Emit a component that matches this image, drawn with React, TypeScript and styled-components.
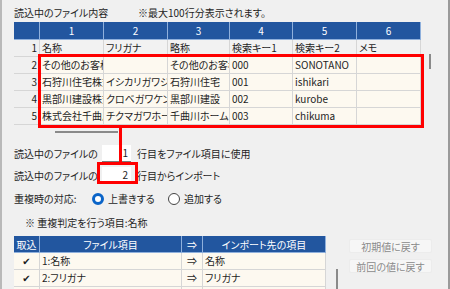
import styled, { createGlobalStyle } from 'styled-components';

const GlobalStyle = createGlobalStyle`
  html, body {
    margin: 0;
    padding: 0;
    background: #f0f0f0;
    overflow: hidden;
  }
  * {
    box-sizing: border-box;
  }
`;

const FONT = `"Noto Sans CJK JP", "Noto Sans", sans-serif`;

const Frame = styled.div`
  position: relative;
  width: 450px;
  height: 289px;
  overflow: hidden;
  border-left: 2px solid #b9b9b9;
  border-right: 2px solid #9a9a9a;
  padding-left: 12px;
  background: #f0f0f0;
  font-family: ${FONT};
  font-size: 10px;
  font-feature-settings: 'palt';
  color: #1e1e1e;
`;

const Caption = styled.div`
  display: flex;
  height: 22px;
  padding-top: 5px;
  line-height: 16px;
`;

const CaptionTitle = styled.span`
  width: 124px;
`;

const GridArea = styled.div`
  display: flex;
`;

const Grid = styled.div<{ cols: string }>`
  display: grid;
  grid-template-columns: ${({ cols }) => cols};
`;

const HeadCell = styled.div`
  height: 18px;
  line-height: 18px;
  background: #22569f;
  color: #ffffff;
  text-align: center;
  border-right: 1px solid #8fb0dc;
  border-bottom: 1px solid #8fb0dc;
  white-space: nowrap;
  overflow: hidden;
`;

const SmallHead = styled(HeadCell)`
  height: 17px;
  line-height: 17px;
`;

const NumCell = styled.div`
  height: 17px;
  line-height: 16px;
  background: #f0f0f0;
  text-align: right;
  padding-right: 2px;
  border-right: 1px solid #d6d6d6;
  border-bottom: 1px solid #d6d6d6;
`;

const Cell = styled.div<{ muted?: boolean; align?: string }>`
  height: 17px;
  line-height: 16px;
  padding: 0 2px;
  background: ${({ muted }) => (muted ? '#f2f2f2' : '#fdf9f0')};
  text-align: ${({ align }) => align || 'left'};
  border-right: 1px solid #d6d6d6;
  border-bottom: 1px solid #d6d6d6;
  white-space: nowrap;
  overflow: hidden;
  text-overflow: clip;
`;

const VTrack = styled.div<{ w: number; top: number; len: number }>`
  width: ${({ w }) => w}px;
  flex-shrink: 0;
  display: flex;
  justify-content: center;

  &::before {
    content: '';
    display: block;
    margin-top: ${({ top }) => top}px;
    width: 2px;
    height: ${({ len }) => len}px;
    background: #8a8a8a;
  }
`;

const HTrack = styled.div`
  height: 10px;
  padding-top: 6px;
  padding-left: 41px;

  &::before {
    content: '';
    display: block;
    width: 63px;
    height: 2px;
    background: #8a8a8a;
  }
`;

const FormRow = styled.div<{ mt: number }>`
  display: flex;
  align-items: center;
  height: 17px;
  margin-top: ${({ mt }) => mt}px;
  white-space: nowrap;
`;

const Label = styled.span<{ w: number }>`
  width: ${({ w }) => w}px;
  flex-shrink: 0;
`;

const NumBox = styled.div`
  width: 29px;
  height: 17px;
  line-height: 16px;
  background: #ffffff;
  border-bottom: 1px solid #7a7a7a;
  text-align: right;
  padding-right: 3px;
  margin-right: 6px;
`;

const Radio = styled.span<{ checked?: boolean }>`
  display: inline-block;
  width: 12px;
  height: 12px;
  border-radius: 50%;
  border: ${({ checked }) => (checked ? '3px solid #0a64c8' : '1px solid #444')};
  background: #ffffff;
  margin-right: 4px;
`;

const RadioOption = styled.span<{ w: number }>`
  display: inline-flex;
  align-items: center;
  width: ${({ w }) => w}px;
`;

const Note = styled.div`
  height: 17px;
  line-height: 17px;
  margin-top: 7px;
  padding-left: 11px;
`;

const BottomArea = styled.div`
  display: flex;
  margin-top: 5px;
`;

const ButtonCol = styled.div`
  display: flex;
  flex-direction: column;
  gap: 6px;
  padding-top: 3px;
  margin-left: 1px;
`;

const GhostButton = styled.div`
  width: 83px;
  height: 14px;
  line-height: 13px;
  border-radius: 2px;
  background: #f6f6f6;
  border: 1px solid #ececec;
  color: #8a8a8a;
  text-align: center;
  font-size: 10px;
`;

const Highlight = styled.div<{ x: number; y: number; w: number; h: number }>`
  position: absolute;
  left: ${({ x }) => x}px;
  top: ${({ y }) => y}px;
  width: ${({ w }) => w}px;
  height: ${({ h }) => h}px;
  border: 3px solid #ff0000;
  pointer-events: none;
`;

const Connector = styled.div`
  position: absolute;
  left: 117px;
  top: 127px;
  width: 3px;
  height: 36px;
  background: #ff0000;
`;

const Check = styled.span`
  font-family: 'DejaVu Sans', sans-serif;
  font-size: 10px;
`;

const topCols = '26px 64px 64px 62px 63px 64px 64px';
const bottomCols = '26px 142px 21px 123px';

const rows = [
  ['その他のお客様', '', 'その他のお客様', '000', 'SONOTANO', ''],
  ['石狩川住宅株式会社', 'イシカリガワジュウタク', '石狩川住宅', '001', 'ishikari', ''],
  ['黒部川建設株式会社', 'クロベガワケンセツ', '黒部川建設', '002', 'kurobe', ''],
  ['株式会社千曲川ホーム', 'チクマガワホーム', '千曲川ホーム', '003', 'chikuma', ''],
];

const headerRow = ['名称', 'フリガナ', '略称', '検索キー1', '検索キー2', 'メモ'];

export default function App() {
  return (
    <>
      <GlobalStyle />
      <Frame>
        <Caption>
          <CaptionTitle>読込中のファイル内容</CaptionTitle>
          <span>※最大100行分表示されます。</span>
        </Caption>

        <GridArea>
          <Grid cols={topCols}>
            <HeadCell />
            {[1, 2, 3, 4, 5, 6].map((n) => (
              <HeadCell key={n}>{n}</HeadCell>
            ))}
            <NumCell>1</NumCell>
            {headerRow.map((t, i) => (
              <Cell key={i} muted>
                {t}
              </Cell>
            ))}
            {rows.flatMap((r, ri) => [
              <NumCell key={'n' + ri}>{ri + 2}</NumCell>,
              ...r.map((t, ci) => <Cell key={ri + '-' + ci}>{t}</Cell>),
            ])}
          </Grid>
          <VTrack w={18} top={32} len={15} />
        </GridArea>
        <HTrack />

        <FormRow mt={10}>
          <Label w={88}>読込中のファイルの</Label>
          <NumBox>1</NumBox>
          <span>行目をファイル項目に使用</span>
        </FormRow>
        <FormRow mt={5}>
          <Label w={88}>読込中のファイルの</Label>
          <NumBox>2</NumBox>
          <span>行目からインポート</span>
        </FormRow>
        <FormRow mt={6}>
          <Label w={78}>重複時の対応:</Label>
          <RadioOption w={76}>
            <Radio checked />
            上書きする
          </RadioOption>
          <RadioOption w={80}>
            <Radio />
            追加する
          </RadioOption>
        </FormRow>
        <Note>※ 重複判定を行う項目:名称</Note>

        <BottomArea>
          <Grid cols={bottomCols}>
            <SmallHead>取込</SmallHead>
            <SmallHead>ファイル項目</SmallHead>
            <SmallHead>⇒</SmallHead>
            <SmallHead>インポート先の項目</SmallHead>
            <Cell align="center">
              <Check>✔</Check>
            </Cell>
            <Cell>1:名称</Cell>
            <Cell align="center">⇒</Cell>
            <Cell>名称</Cell>
            <Cell align="center">
              <Check>✔</Check>
            </Cell>
            <Cell>2:フリガナ</Cell>
            <Cell align="center">⇒</Cell>
            <Cell>フリガナ</Cell>
            <Cell />
            <Cell />
            <Cell />
            <Cell />
          </Grid>
          <VTrack w={22} top={33} len={30} />
          <ButtonCol>
            <GhostButton>初期値に戻す</GhostButton>
            <GhostButton>前回の値に戻す</GhostButton>
          </ButtonCol>
        </BottomArea>

        <Highlight x={36} y={54} w={386} h={74} />
        <Connector />
        <Highlight x={95} y={162} w={41} h={22} />
      </Frame>
    </>
  );
}
